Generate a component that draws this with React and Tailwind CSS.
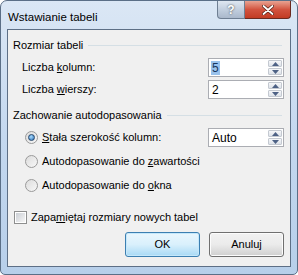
import React from "react";

function Spinner({ value, selected }) {
  return (
    <div className="flex h-[19px] w-[76px] border border-[#abadb3] bg-white">
      <div className="flex flex-1 items-center pl-[2px]">
        {selected ? (
          <span className="bg-[#99c2ec] px-[1px] text-[12px] leading-[14px] text-[#17365d]">{value}</span>
        ) : (
          <span className="px-[1px] text-[12px] leading-[14px]">{value}</span>
        )}
      </div>
      <div className="flex w-[16px] flex-col gap-[1px] p-[1px]">
        <div className="flex flex-1 items-center justify-center rounded-[1px] border border-[#c4c9d1] bg-gradient-to-b from-[#f6f7f9] to-[#dde2e9]">
          <svg width="7" height="4" viewBox="0 0 7 4">
            <path d="M0 4 L3.5 0 L7 4 Z" fill="#4d6185" />
          </svg>
        </div>
        <div className="flex flex-1 items-center justify-center rounded-[1px] border border-[#c4c9d1] bg-gradient-to-b from-[#f6f7f9] to-[#dde2e9]">
          <svg width="7" height="4" viewBox="0 0 7 4">
            <path d="M0 0 L7 0 L3.5 4 Z" fill="#4d6185" />
          </svg>
        </div>
      </div>
    </div>
  );
}

function Radio({ checked }) {
  return (
    <div className="flex h-[13px] w-[13px] items-center justify-center rounded-full border border-[#9a9a9a] bg-gradient-to-br from-[#dcdcdc] to-[#f8f8f8]">
      {checked && (
        <div className="h-[7px] w-[7px] rounded-full border border-[#26476c] bg-[radial-gradient(circle_at_40%_35%,#a8dcff,#2b6fb7)]" />
      )}
    </div>
  );
}

function GroupHeader({ children }) {
  return (
    <div className="flex h-[16px] items-center gap-[5px] pl-[5px] pr-[8px]">
      <span>{children}</span>
      <div className="h-0 flex-1 border-t border-[#d5dfe5]" />
    </div>
  );
}

export default function App() {
  return (
    <div
      className="h-[275px] w-[298px] text-[11px] text-black"
      style={{ fontFamily: '"Liberation Sans", Arial, sans-serif' }}
    >
      <div className="flex h-full w-full flex-col rounded-t-[7px] rounded-b-[5px] border border-[#5b6f87] bg-gradient-to-b from-[#dbe7f5] via-[#c4d8ef] to-[#b7cfea]">
        {/* title bar */}
        <div className="flex h-[28px] items-start">
          <span className="mt-[9px] pl-[7px] text-[11.5px] leading-[14px] text-black">Wstawianie tabeli</span>
          <div className="ml-auto mr-[6px] flex">
            <div className="flex h-[18px] w-[28px] items-center justify-center rounded-bl-[4px] border border-t-0 border-[#6f7f93] bg-gradient-to-b from-[#dfe7f1] via-[#c2cfdf] to-[#aab8cb] text-[12px] font-bold leading-none text-white [text-shadow:0_0_2px_#333]">
              ?
            </div>
            <div className="flex h-[18px] w-[46px] items-center justify-center rounded-br-[4px] border border-l-0 border-t-0 border-[#6b2a20] bg-gradient-to-b from-[#e8a292] via-[#d2533f] to-[#c23b23]">
              <svg width="12" height="10" viewBox="0 0 12 10">
                <path d="M1.5 1 L10.5 9 M10.5 1 L1.5 9" stroke="#4a1a10" strokeWidth="3.2" strokeLinecap="round" />
                <path d="M1.5 1 L10.5 9 M10.5 1 L1.5 9" stroke="#ffffff" strokeWidth="1.8" strokeLinecap="round" />
              </svg>
            </div>
          </div>
        </div>

        {/* client area */}
        <div className="mx-[6px] mb-[7px] flex flex-1 flex-col border border-[#5d6f86] bg-[#f0f0f0] pt-[7px]">
          <GroupHeader>Rozmiar tabeli</GroupHeader>

          <div className="mt-[5px] flex h-[19px] items-center pl-[14px] pr-[6px]">
            <span>
              Liczba <span className="underline">k</span>olumn:
            </span>
            <div className="ml-auto">
              <Spinner value="5" selected />
            </div>
          </div>

          <div className="mt-[3px] flex h-[19px] items-center pl-[14px] pr-[6px]">
            <span>
              Liczba <span className="underline">w</span>ierszy:
            </span>
            <div className="ml-auto">
              <Spinner value="2" />
            </div>
          </div>

          <div className="mt-[8px]">
            <GroupHeader>Zachowanie autodopasowania</GroupHeader>
          </div>

          <div className="mt-[5px] flex h-[19px] items-center gap-[4px] pl-[17px] pr-[6px]">
            <Radio checked />
            <span>
              <span className="underline">S</span>tała szerokość kolumn:
            </span>
            <div className="ml-auto">
              <Spinner value="Auto" />
            </div>
          </div>

          <div className="mt-[5px] flex h-[19px] items-center gap-[4px] pl-[17px]">
            <Radio />
            <span>
              Autodopasowanie do <span className="underline">z</span>awartości
            </span>
          </div>

          <div className="mt-[5px] flex h-[19px] items-center gap-[4px] pl-[17px]">
            <Radio />
            <span>
              Autodopasowanie do <span className="underline">o</span>kna
            </span>
          </div>

          <div className="mt-[14px] flex h-[16px] items-center gap-[4px] pl-[6px]">
            <div className="flex h-[13px] w-[13px] items-center justify-center border border-[#8e8f8f] bg-white">
              <div className="h-[9px] w-[9px] bg-gradient-to-br from-[#cbcfd5] to-[#f6f6f6]" />
            </div>
            <span>
              Zapa<span className="underline">m</span>iętaj rozmiary nowych tabel
            </span>
          </div>

          <div className="mt-[7px] flex justify-end gap-[9px] pr-[6px]">
            <button className="h-[25px] w-[75px] rounded-[3px] border border-[#3c7fb1] bg-gradient-to-b from-[#eaf6fd] via-[#d9f0fc] to-[#a7d9f5] shadow-[inset_0_0_0_1px_#c5e8fb]">
              OK
            </button>
            <button className="h-[25px] w-[75px] rounded-[3px] border border-[#707070] bg-gradient-to-b from-[#f2f2f2] via-[#ebebeb] to-[#cfcfcf] shadow-[inset_0_0_0_1px_#fcfcfc]">
              Anuluj
            </button>
          </div>
        </div>
      </div>
    </div>
  );
}
